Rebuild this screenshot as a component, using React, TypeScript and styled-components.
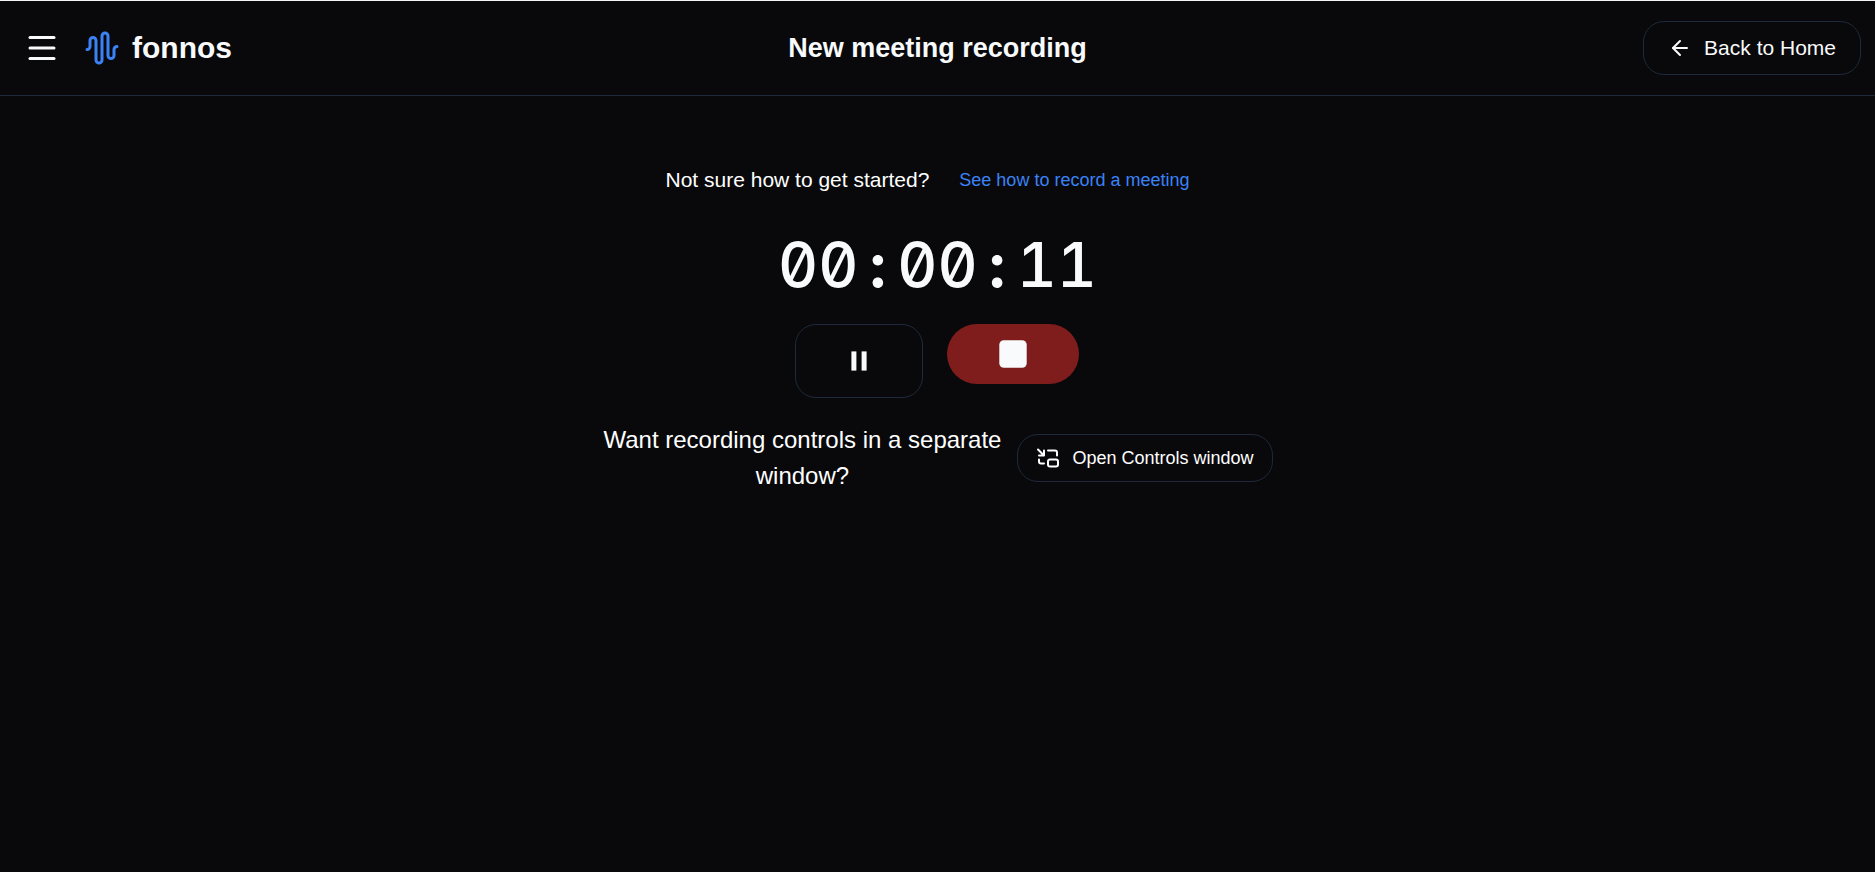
import React from "react";
import styled, { createGlobalStyle } from "styled-components";
import { ArrowLeft, AudioWaveform, Menu } from "lucide-react";

const GlobalStyle = createGlobalStyle`
  *, *::before, *::after { box-sizing: border-box; }
  body {
    margin: 0;
    background: #09090b;
    color: #ffffff;
    font-family: "Liberation Sans", Arial, sans-serif;
  }
  button { font-family: inherit; color: inherit; cursor: pointer; }
`;

const Page = styled.div`
  min-height: 100vh;
  display: flex;
  flex-direction: column;
  border-top: 1px solid #f1f5f4;
`;

const Header = styled.header`
  display: grid;
  grid-template-columns: 1fr auto 1fr;
  align-items: center;
  height: 95px;
  padding: 0 14px 0 24px;
  border-bottom: 1px solid #1e293b;
  color: #f8fafc;
`;

const HeaderStart = styled.div`
  display: flex;
  align-items: center;
  gap: 24px;
`;

const HeaderEnd = styled.div`
  display: flex;
  justify-content: flex-end;
`;

const MenuButton = styled.button`
  display: flex;
  padding: 0;
  border: 0;
  background: none;
`;

const Brand = styled.a`
  display: flex;
  align-items: center;
  gap: 12px;
  color: inherit;
  font-size: 30px;
  line-height: 36px;
  font-weight: 700;
  text-decoration: none;

  svg { color: #3b82f6; }
`;

const Title = styled.h1`
  margin: 0;
  margin-right: 10px;
  font-size: 27px;
  line-height: 36px;
  font-weight: 700;
`;

const OutlineButton = styled.button<{ $size: "medium" | "large" }>`
  display: inline-flex;
  flex-shrink: 0;
  align-items: center;
  justify-content: center;
  gap: 12px;
  height: ${({ $size }) => ($size === "large" ? 54 : 48)}px;
  padding: 0 ${({ $size }) => ($size === "large" ? 24 : 18)}px;
  border: 1px solid #1e293b;
  border-radius: 21px;
  background: transparent;
  font-size: ${({ $size }) => ($size === "large" ? 21 : 18)}px;
  white-space: nowrap;
`;

const Recorder = styled.main`
  display: flex;
  flex-direction: column;
  align-items: center;
  padding: 60px 24px;
`;

const HelpRow = styled.div`
  display: flex;
  align-items: center;
  gap: 10px;
  height: 48px;
  font-size: 21px;
`;

const HelpLink = styled.a`
  padding: 0 20px;
  color: #3b82f6;
  font-size: 18px;
  text-decoration: none;
`;

const Timer = styled.time`
  display: flex;
  margin-top: 24px;
  color: #f8fafc;
  font-family: Inter, sans-serif;
  font-size: 62px;
  font-weight: 500;
  font-feature-settings: "tnum", "zero", "ss03";
  line-height: 74px;
`;

const Separator = styled.span`
  width: 39px;
  font-weight: 700;
  text-align: center;
`;

const Controls = styled.div`
  display: flex;
  align-items: flex-start;
  gap: 24px;
  margin: 22px 2px 0 0;
`;

const PauseButton = styled.button`
  display: flex;
  align-items: center;
  justify-content: center;
  width: 128px;
  height: 74px;
  border: 1px solid #1e293b;
  border-radius: 21px;
  background: transparent;
`;

const StopButton = styled.button`
  display: flex;
  align-items: center;
  justify-content: center;
  width: 132px;
  height: 60px;
  border: 0;
  border-radius: 30px;
  background: #7f1d1d;
`;

const WindowRow = styled.div`
  display: flex;
  align-items: center;
  gap: 15px;
  max-width: 670px;
  margin-top: 24px;
`;

const WindowText = styled.p`
  margin: 0;
  font-size: 24px;
  line-height: 36px;
  text-align: center;
`;

function PopOutIcon() {
  return (
    <svg
      width="24"
      height="24"
      viewBox="0 0 24 24"
      fill="none"
      stroke="currentColor"
      strokeWidth="2"
      strokeLinecap="round"
      strokeLinejoin="round"
      aria-hidden="true"
    >
      <path d="M8 4.5v5H3m-1-6 6 6m13 0v-3c0-1.16-.84-2-2-2h-7m-9 9v2c0 1.05.95 2 2 2h3" />
      <rect width="10" height="7" x="12" y="13.5" ry="2" />
    </svg>
  );
}

export default function App() {
  return (
    <>
      <GlobalStyle />
      <Page>
        <Header>
          <HeaderStart>
            <MenuButton type="button" aria-label="Open menu">
              <Menu size={36} />
            </MenuButton>
            <Brand href="#">
              <AudioWaveform size={36} />
              fonnos
            </Brand>
          </HeaderStart>
          <Title>New meeting recording</Title>
          <HeaderEnd>
            <OutlineButton type="button" $size="large">
              <ArrowLeft size={24} />
              Back to Home
            </OutlineButton>
          </HeaderEnd>
        </Header>
        <Recorder>
          <HelpRow>
            <span>Not sure how to get started?</span>
            <HelpLink href="#">See how to record a meeting</HelpLink>
          </HelpRow>
          <Timer>
            00<Separator>:</Separator>00<Separator>:</Separator>11
          </Timer>
          <Controls>
            <PauseButton type="button" aria-label="Pause recording">
              <svg width="18" height="22" viewBox="0 0 18 22" fill="#f8fafc">
                <rect x="1.4" y="1.4" width="5" height="19.2" />
                <rect x="11.6" y="1.4" width="5" height="19.2" />
              </svg>
            </PauseButton>
            <StopButton type="button" aria-label="Stop recording">
              <svg width="28" height="28" viewBox="0 0 28 28" fill="#f8fafc">
                <rect x="0.3" y="0.3" width="27.4" height="27.4" rx="4.5" />
              </svg>
            </StopButton>
          </Controls>
          <WindowRow>
            <WindowText>Want recording controls in a separate window?</WindowText>
            <OutlineButton type="button" $size="medium">
              <PopOutIcon />
              Open Controls window
            </OutlineButton>
          </WindowRow>
        </Recorder>
      </Page>
    </>
  );
}
